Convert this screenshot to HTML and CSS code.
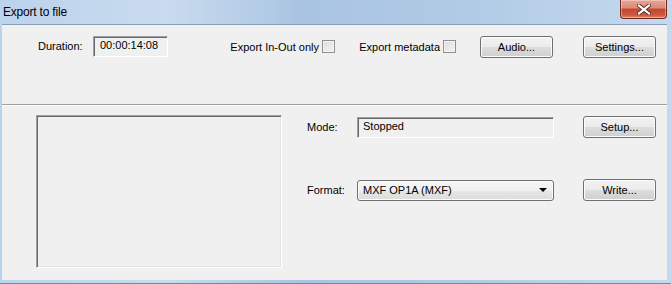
FILE: index.html
```html
<!DOCTYPE html>
<html lang="en">
<head>
    <meta charset="UTF-8">
    <title>Export to file</title>
    <link rel="stylesheet" href="styles.css">
</head>
<body>
    <div class="window">
        <div class="titlebar">
            <span class="title">Export to file</span>
            <button class="close-btn" aria-label="Close">
                <svg width="14" height="11" viewBox="0 0 14 11">
                    <path d="M2 1.5 L12 9.5 M12 1.5 L2 9.5" stroke="#5a2a22" stroke-width="4" stroke-linecap="square"/>
                    <path d="M2 1.5 L12 9.5 M12 1.5 L2 9.5" stroke="#ffffff" stroke-width="2.2" stroke-linecap="square"/>
                </svg>
            </button>
        </div>

        <div class="client">
            <div class="top-panel">
                <span class="lbl duration-lbl">Duration:</span>
                <div class="readout duration-box">00:00:14:08</div>

                <label class="check inout">Export In-Out only <span class="box"></span></label>
                <label class="check meta">Export metadata <span class="box"></span></label>

                <button class="btn audio-btn">Audio...</button>
                <button class="btn settings-btn">Settings...</button>
            </div>

            <div class="bottom-panel">
                <div class="preview"></div>
                <div class="controls">
                    <div class="row">
                        <span class="lbl field-lbl">Mode:</span>
                        <div class="readout field">Stopped</div>
                        <button class="btn">Setup...</button>
                    </div>
                    <div class="row format-row">
                        <span class="lbl field-lbl">Format:</span>
                        <div class="combo field">
                            <span>MXF OP1A (MXF)</span>
                            <span class="arrow"></span>
                        </div>
                        <button class="btn">Write...</button>
                    </div>
                </div>
            </div>
        </div>
    </div>
</body>
</html>
```

FILE: styles.css
```css
html, body {
    margin: 0;
    padding: 0;
}
body {
    font-family: "Liberation Sans", Arial, sans-serif;
    font-size: 11px;
    color: #000;
    background: #fff;
}
.window {
    width: 671px;
    height: 284px;
    box-sizing: border-box;
    display: flex;
    flex-direction: column;
    padding: 0 4px 3px 2px;
    background: linear-gradient(to right, #bcd3ec 0%, #c9dbee 25%, #a9c4e2 45%, #b1cbe6 70%, #c5d9ee 100%);
    border-bottom: 1px solid #6f8aa8;
}
.titlebar {
    height: 24px;
    display: flex;
    align-items: flex-start;
    justify-content: space-between;
}
.title {
    margin: 5px 0 0 1px;
    font-size: 12px;
    letter-spacing: -0.2px;
    color: #000;
}
.close-btn {
    width: 47px;
    height: 19px;
    margin-right: 0;
    padding: 0;
    border: 1px solid #6d2b23;
    border-top: none;
    border-radius: 0 0 4px 4px;
    background: linear-gradient(to bottom, #e8a493 0%, #d98b76 45%, #c3442c 50%, #cf5a3f 85%, #e58a66 100%);
    box-shadow: inset 0 0 0 1px rgba(255, 255, 255, 0.35);
    display: flex;
    align-items: center;
    justify-content: center;
}
.client {
    flex: 1;
    background: #f0f0f0;
    border-top: 1px solid #8a9db3;
    display: flex;
    flex-direction: column;
}
.top-panel {
    height: 80px;
    box-sizing: border-box;
    padding: 11px 0 0 36px;
    display: flex;
    align-items: flex-start;
    border-bottom: 1px solid #a0a0a0;
    box-shadow: 0 1px 0 #ffffff;
}
.lbl {
    line-height: 21px;
}
.duration-lbl {
    width: 55px;
}
.readout {
    box-sizing: border-box;
    height: 21px;
    padding: 2px 5px 0;
    background: #f0f0f0;
    border: 1px solid;
    border-color: #a0a0a0 #ffffff #ffffff #a0a0a0;
    box-shadow: inset 1px 1px 0 #696969;
}
.duration-box {
    width: 75px;
    padding-left: 6px;
}
.check {
    display: flex;
    align-items: center;
    justify-content: flex-end;
    gap: 3px;
    height: 21px;
}
.inout {
    width: 107px;
    margin-left: 60px;
}
.meta {
    width: 98px;
    margin-left: 23px;
}
.box {
    width: 11px;
    height: 11px;
    border: 1px solid #8e8f8f;
    background: linear-gradient(135deg, #dcdcdc 0%, #f4f4f4 100%);
    box-shadow: inset 0 0 0 1px #f4f4f4;
}
.btn {
    box-sizing: border-box;
    width: 73px;
    height: 22px;
    padding: 0;
    font-family: inherit;
    font-size: 11px;
    color: #000;
    border: 1px solid #707070;
    border-radius: 3px;
    background: linear-gradient(to bottom, #f2f2f2 0%, #ebebeb 50%, #dddddd 51%, #cfcfcf 100%);
    box-shadow: inset 0 0 0 1px #fcfcfc;
}
.audio-btn {
    margin-left: 24px;
}
.settings-btn {
    margin-left: 30px;
}
.bottom-panel {
    flex: 1;
    display: flex;
    align-items: flex-start;
    padding: 10px 0 0 34px;
}
.preview {
    width: 246px;
    height: 153px;
    box-sizing: border-box;
    border: 1px solid;
    border-color: #a0a0a0 #ffffff #ffffff #a0a0a0;
    box-shadow: inset 1px 1px 0 #696969, inset -1px -1px 0 #e3e3e3;
}
.controls {
    margin-left: 25px;
    padding-top: 1px;
    display: flex;
    flex-direction: column;
    gap: 41px;
}
.row {
    display: flex;
    align-items: center;
}
.field-lbl {
    width: 50px;
}
.field {
    width: 197px;
    margin-right: 29px;
}
.combo {
    box-sizing: border-box;
    height: 21px;
    padding: 0 6px 0 5px;
    display: flex;
    align-items: center;
    justify-content: space-between;
    border: 1px solid #707070;
    border-radius: 3px;
    background: linear-gradient(to bottom, #f6f6f6 0%, #f0f0f0 50%, #e6e6e6 51%, #dcdcdc 100%);
    box-shadow: inset 0 0 0 1px #fcfcfc;
}
.arrow {
    width: 0;
    height: 0;
    border-left: 4px solid transparent;
    border-right: 4px solid transparent;
    border-top: 4px solid #000;
}
```
